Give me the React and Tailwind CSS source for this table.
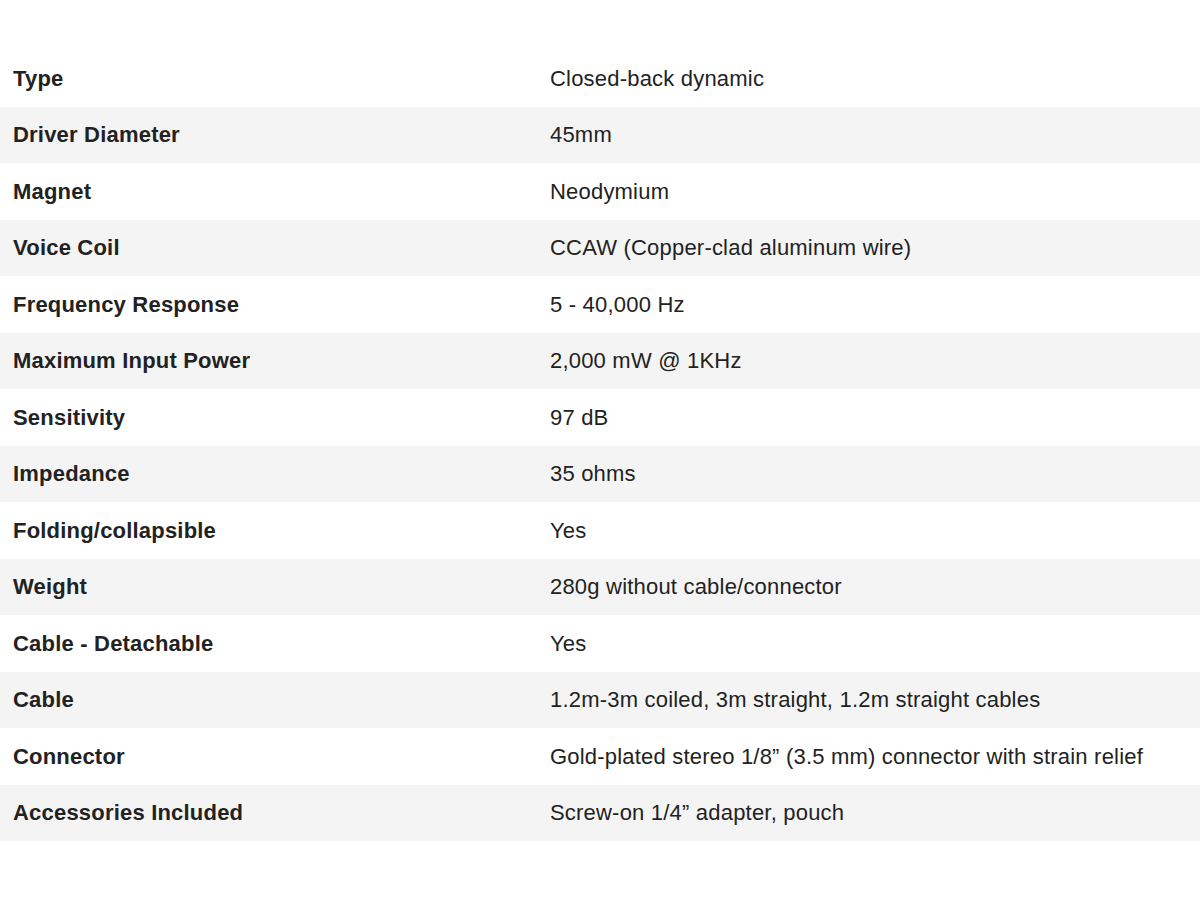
import React from "react";

const specs = [
  ["Type", "Closed-back dynamic"],
  ["Driver Diameter", "45mm"],
  ["Magnet", "Neodymium"],
  ["Voice Coil", "CCAW (Copper-clad aluminum wire)"],
  ["Frequency Response", "5 - 40,000 Hz"],
  ["Maximum Input Power", "2,000 mW @ 1KHz"],
  ["Sensitivity", "97 dB"],
  ["Impedance", "35 ohms"],
  ["Folding/collapsible", "Yes"],
  ["Weight", "280g without cable/connector"],
  ["Cable - Detachable", "Yes"],
  ["Cable", "1.2m-3m coiled, 3m straight, 1.2m straight cables"],
  ["Connector", "Gold-plated stereo 1/8” (3.5 mm) connector with strain relief"],
  ["Accessories Included", "Screw-on 1/4” adapter, pouch"],
];

const App = () => {
  return (
    <div className="w-[1200px] h-[900px] bg-white pt-[50px] font-['Liberation_Sans',Arial,sans-serif] text-[22px] tracking-[0.2px] text-[#222]">
      {specs.map(([label, value], i) => (
        <div
          key={label}
          className={`h-[56.5px] flex items-center pl-[13px] ${i % 2 === 1 ? "bg-[#f4f4f4]" : "bg-white"}`}
        >
          <div className="w-[537px] font-bold">{label}</div>
          <div className="flex-1">{value}</div>
        </div>
      ))}
    </div>
  );
};

export default App;
